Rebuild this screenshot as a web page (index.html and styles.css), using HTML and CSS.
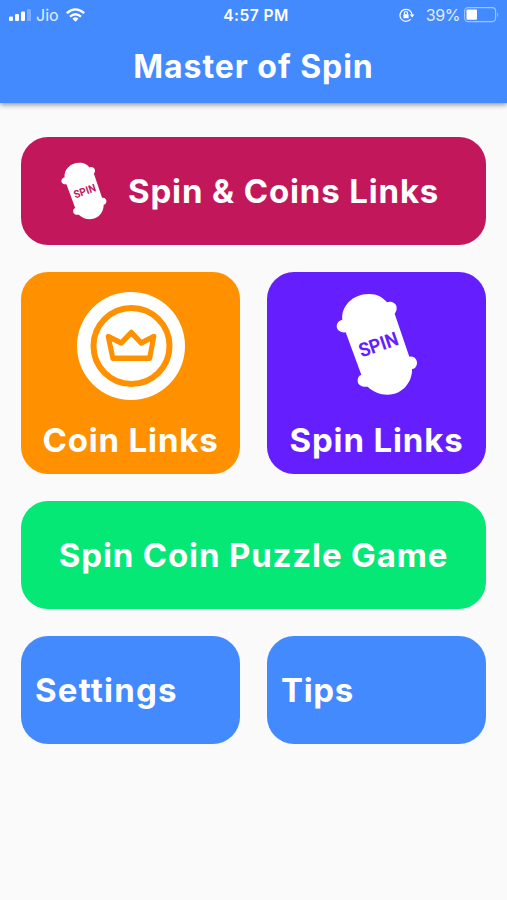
FILE: index.html
```
<!DOCTYPE html>
<html lang="en">
<head>
<meta charset="utf-8">
<title>Master of Spin</title>
<link rel="stylesheet" href="styles.css">
</head>
<body>
<header class="appbar">
  <div class="status">
    <div class="left">
      <svg width="22" height="12" viewBox="0 0 22 12" fill="#fff"><rect y="7.5" width="4" height="4.5" rx="1"/><rect x="6" y="5" width="4" height="7" rx="1"/><rect x="12" y="2.500" width="4" height="9.500" rx="1"/><rect x="18" width="4" height="12" rx="1" opacity=".3"/></svg>
      <span class="carrier">Jio</span>
      <svg class="wifi" width="19" height="14" viewBox="0 0 19 14" fill="none" stroke="#fff" stroke-width="2.300"><path d="M.8 5.200Q9.500-2.500 18.200 5.200M4 8.600Q9.500 3.800 15 8.600"/><path d="M6.500 10.700Q9.500 8 12.500 10.700L9.500 13.700Z" fill="#fff" stroke="none"/></svg>
    </div>
    <div class="time">4:57 PM</div>
    <div class="right">
      <svg width="16" height="14" viewBox="0 0 16 14" fill="none" stroke="#fff" stroke-width="1.200"><path d="M11.600 11.200A6 6 0 1 1 13 7"/><path d="M10.800 6.600h4.600l-2.300 3z" fill="#fff" stroke="none"/><rect x="4.400" y="6.200" width="5.200" height="4" rx=".5" fill="#fff" stroke="none"/><path d="M5.500 6.500V5a1.500 1.500 0 0 1 3 0v1.500"/></svg>
      <span class="percent">39%</span>
      <svg width="36" height="16" viewBox="0 0 36 16"><rect x=".6" y=".6" width="31" height="14" rx="3.500" fill="none" stroke="#fff" stroke-opacity=".5" stroke-width="1.100"/><rect x="2.500" y="2.500" width="10.500" height="10.200" rx="1" fill="#fff"/><path d="M33.300 5.200q1.900 2.500 0 5z" fill="#fff" opacity=".55"/></svg>
    </div>
  </div>
  <h1>Master of Spin</h1>
</header>
<main class="menu">
  <a class="card wide pink">
    <svg class="spin-small" viewBox="50 40 246 308"><path id="board" fill="#fff" d="M148 43C175 43 190 53 203 68C215 62 232 70 232 84C232 94 228 98 226 102L270 231C285 228 294 240 293 252C291 262 285 268 278 268C280 300 255 345 205 345C180 345 160 335 145 321C130 323 115 317 115 303C115 292 120 288 126 285L79 158C65 160 52 152 52 140C52 128 62 122 69 120C65 80 100 43 148 43Z"/><text class="spin-label" transform="translate(177 194) rotate(-19)" y="21" text-anchor="middle" textLength="122" lengthAdjust="spacingAndGlyphs">SPIN</text></svg>
    <span class="t-both">Spin &amp; Coins Links</span>
  </a>
  <a class="card tall orange">
    <svg class="coin" viewBox="0 0 108 108"><circle cx="54" cy="54" r="54" fill="#fff"/><g fill="none" stroke="#ff9100"><circle cx="54.500" cy="54" r="38" stroke-width="6"/><path d="M29.500 44.500L34.500 66.300H74L78.500 44.500L65 51L54.300 40.500L43.500 51Z" transform="translate(3.800 0) scale(.93 1)" stroke-width="5.500" stroke-linejoin="round"/></g></svg>
    <span class="t-coin">Coin Links</span>
  </a>
  <a class="card tall purple">
    <svg class="spin-large" viewBox="50 40 246 308"><use href="#board"/><text class="spin-label" transform="translate(177 194) rotate(-19)" y="21" text-anchor="middle" textLength="122" lengthAdjust="spacingAndGlyphs">SPIN</text></svg>
    <span class="t-spin">Spin Links</span>
  </a>
  <a class="card wide green"><span class="t-game">Spin Coin Puzzle Game</span></a>
  <a class="card blue"><span class="t-set">Settings</span></a>
  <a class="card blue"><span class="t-tips">Tips</span></a>
</main>
</body>
</html>
```

FILE: styles.css
```
* { box-sizing: border-box; }
body {
  margin: 0;
  height: 900px;
  overflow: hidden;
  background: #fafafa;
  color: #fff;
  font-family: Inter, "Liberation Sans", sans-serif;
}
svg { display: block; flex: none; }
.appbar {
  height: 103px;
  background: #448aff;
  box-shadow: 0 2px 5px rgba(0, 0, 0, .4);
}
.status {
  display: grid;
  grid-template-columns: 1fr auto 1fr;
  align-items: center;
  height: 30px;
  padding: 0 7px 0 9px;
  font-size: 16px;
}
.left, .right { display: flex; align-items: center; }
.right { justify-content: flex-end; }
.carrier { margin-left: 5px; width: 22px; opacity: .85; }
.wifi { margin-left: 8px; }
.time { font-weight: 600; font-size: 15.5px; letter-spacing: .45px; padding-left: 3px; }
.percent { margin: 0 4px 0 11px; opacity: .85; letter-spacing: -.4px; }
h1 {
  margin: 17px 0 0;
  font-size: 32px;
  line-height: 40px;
  font-weight: 700;
  text-align: center;
  white-space: nowrap;
  letter-spacing: .95px;
}
.menu {
  display: grid;
  grid-template-columns: 1fr 1fr;
  grid-template-rows: 108px 202px 108px 108px;
  gap: 27px;
  padding: 34px 21px 0;
}
.card {
  display: flex;
  align-items: center;
  border-radius: 27px;
  font-size: 33px;
  line-height: 40px;
  font-weight: 700;
  white-space: nowrap;
  letter-spacing: .85px;
}
.wide { grid-column: 1 / -1; }
.tall { flex-direction: column; }
.pink { background: #c2185b; padding-left: 40px; }
.orange { background: #ff9100; }
.purple { background: #651fff; }
.green { background: #05e876; justify-content: center; }
.blue { background: #448aff; padding-left: 14px; }
.spin-small { width: 46px; height: 58px; margin-right: 21px; }
.spin-large { width: 82px; height: 102.700px; margin-top: 21px; }
.coin { width: 108px; height: 108px; margin-top: 20px; }
.t-coin { margin-top: 20px; }
.t-spin { margin-top: 24px; }
.t-set { letter-spacing: 1.2px; }
.t-tips { letter-spacing: .7px; }
.spin-label {
  font-family: Roboto, "Liberation Sans", sans-serif;
  font-size: 58px;
  font-weight: 700;
  letter-spacing: 0;
}
.pink .spin-label { fill: #c2185b; }
.purple .spin-label { fill: #651fff; }
```
